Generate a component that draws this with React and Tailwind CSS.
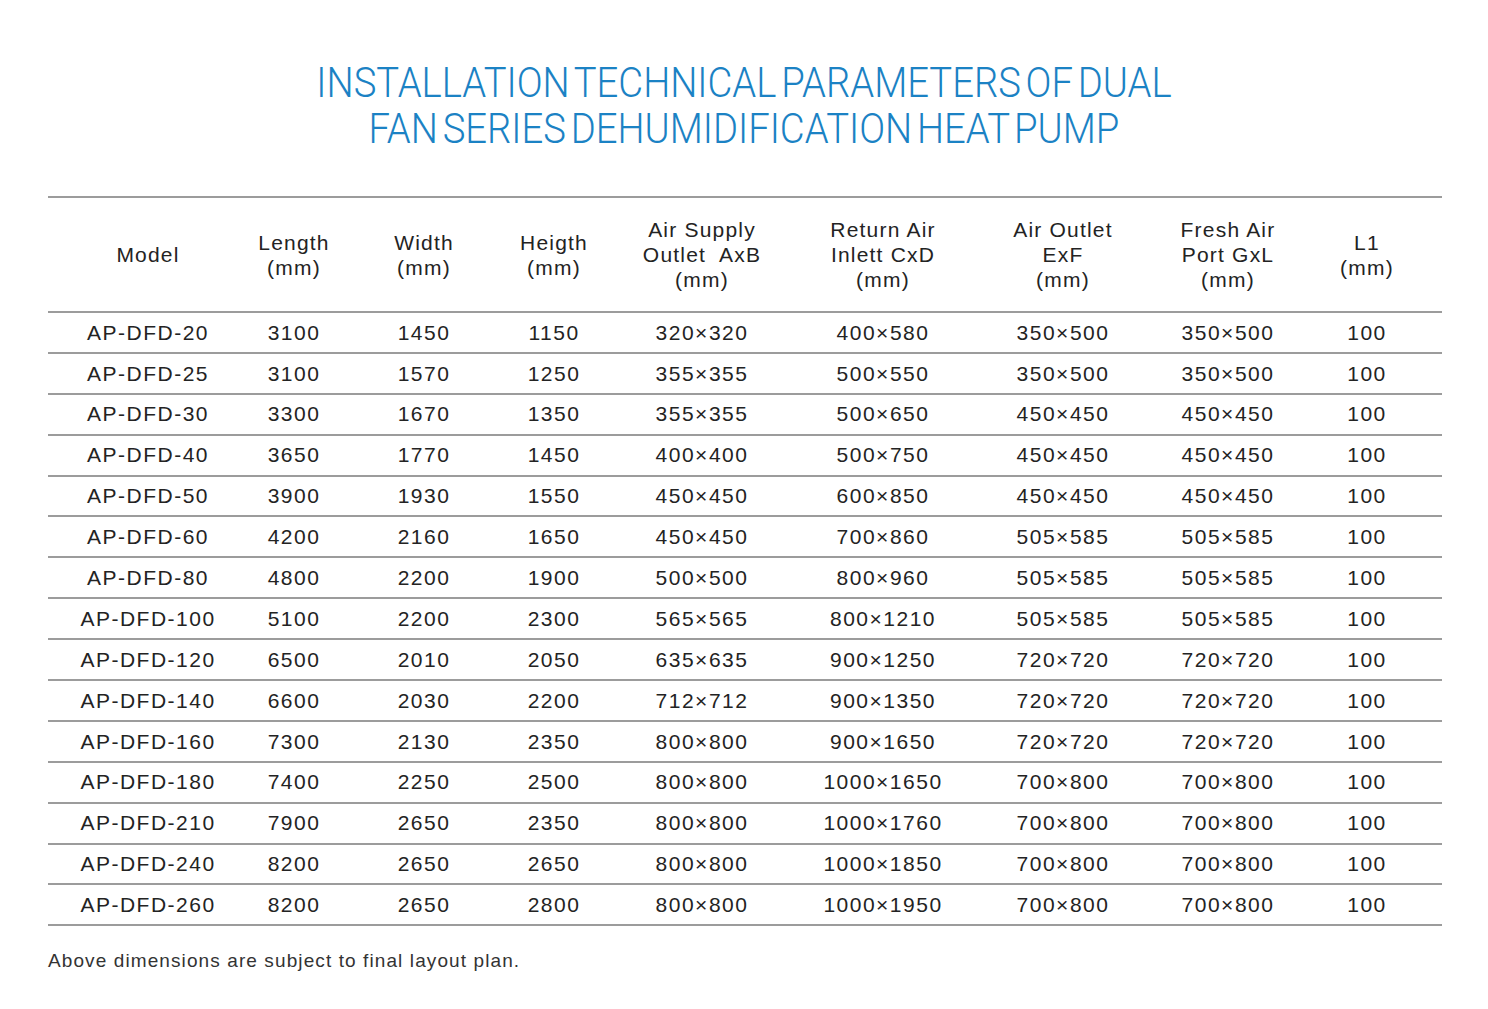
const rows = [
  ["AP-DFD-20", "3100", "1450", "1150", "320×320", "400×580", "350×500", "350×500", "100"],
  ["AP-DFD-25", "3100", "1570", "1250", "355×355", "500×550", "350×500", "350×500", "100"],
  ["AP-DFD-30", "3300", "1670", "1350", "355×355", "500×650", "450×450", "450×450", "100"],
  ["AP-DFD-40", "3650", "1770", "1450", "400×400", "500×750", "450×450", "450×450", "100"],
  ["AP-DFD-50", "3900", "1930", "1550", "450×450", "600×850", "450×450", "450×450", "100"],
  ["AP-DFD-60", "4200", "2160", "1650", "450×450", "700×860", "505×585", "505×585", "100"],
  ["AP-DFD-80", "4800", "2200", "1900", "500×500", "800×960", "505×585", "505×585", "100"],
  ["AP-DFD-100", "5100", "2200", "2300", "565×565", "800×1210", "505×585", "505×585", "100"],
  ["AP-DFD-120", "6500", "2010", "2050", "635×635", "900×1250", "720×720", "720×720", "100"],
  ["AP-DFD-140", "6600", "2030", "2200", "712×712", "900×1350", "720×720", "720×720", "100"],
  ["AP-DFD-160", "7300", "2130", "2350", "800×800", "900×1650", "720×720", "720×720", "100"],
  ["AP-DFD-180", "7400", "2250", "2500", "800×800", "1000×1650", "700×800", "700×800", "100"],
  ["AP-DFD-210", "7900", "2650", "2350", "800×800", "1000×1760", "700×800", "700×800", "100"],
  ["AP-DFD-240", "8200", "2650", "2650", "800×800", "1000×1850", "700×800", "700×800", "100"],
  ["AP-DFD-260", "8200", "2650", "2800", "800×800", "1000×1950", "700×800", "700×800", "100"],
];

const headers = [
  ["Model"],
  ["Length", "(mm)"],
  ["Width", "(mm)"],
  ["Heigth", "(mm)"],
  ["Air Supply", "Outlet  AxB", "(mm)"],
  ["Return Air", "Inlett CxD", "(mm)"],
  ["Air Outlet", "ExF", "(mm)"],
  ["Fresh Air", "Port GxL", "(mm)"],
  ["L1", "(mm)"],
];

// column widths chosen so each cell's centre sits under the reference's text
const cols = "grid grid-cols-[200px_92px_168px_92px_204px_158px_202px_128px_150px]";

export default function App() {
  return (
    <div className="min-h-[1009px] w-[1488px] bg-white font-['Liberation_Sans',Arial,sans-serif] text-[#232323]">
      <h1 className="pt-[60px] text-center font-['Roboto',sans-serif] text-[42px] font-light leading-[46px] text-[#1b82c4]">
        <span className="inline-block scale-x-[0.91] [word-spacing:-5px]">
          INSTALLATION TECHNICAL PARAMETERS OF DUAL
          <br />
          FAN SERIES DEHUMIDIFICATION HEAT PUMP
        </span>
      </h1>

      <div className="ml-[48px] mr-[46px] mt-[44px] border-t-2 border-[#9c9c9c]">
        <div className={`${cols} h-[115px] items-center border-b-2 border-[#9c9c9c] text-[21px] leading-[25px] tracking-[1.2px]`}>
          {headers.map((h, i) => (
            <div key={i} className="flex flex-col items-center whitespace-pre text-center">
              {h.map((line, j) => (
                <span key={j}>{line}</span>
              ))}
            </div>
          ))}
        </div>

        {rows.map((r) => (
          <div
            key={r[0]}
            className={`${cols} h-[40.9px] items-center border-b-2 border-[#9c9c9c] text-[21px] tracking-[1.5px]`}
          >
            {r.map((cell, i) => (
              <div key={i} className="text-center">
                {cell}
              </div>
            ))}
          </div>
        ))}
      </div>

      <p className="ml-[48px] mt-[21px] text-[19px] tracking-[1.1px] text-[#333]">
        Above dimensions are subject to final layout plan.
      </p>
    </div>
  );
}
